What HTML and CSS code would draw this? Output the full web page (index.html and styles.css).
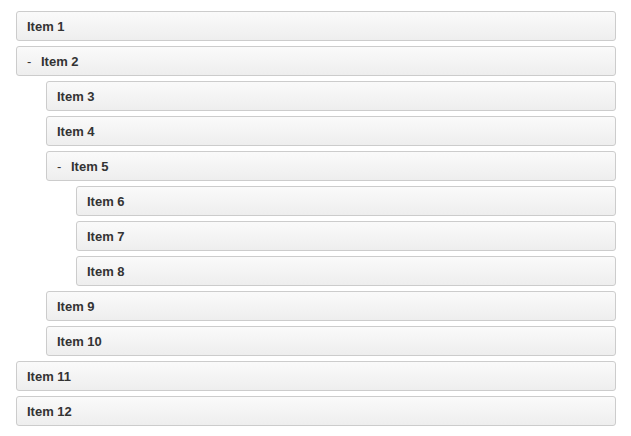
FILE: index.html
```html
<!DOCTYPE html>
<html>
<head>
<meta charset="utf-8">
<link rel="stylesheet" href="styles.css">
</head>
<body>
<div class="dd">
  <ol class="dd-list">
    <li class="dd-item"><div class="dd-handle">Item 1</div></li>
    <li class="dd-item">
      <div class="dd-handle"><span class="toggle">-</span>Item 2</div>
      <ol class="dd-list nested">
        <li class="dd-item"><div class="dd-handle">Item 3</div></li>
        <li class="dd-item"><div class="dd-handle">Item 4</div></li>
        <li class="dd-item">
          <div class="dd-handle"><span class="toggle">-</span>Item 5</div>
          <ol class="dd-list nested">
            <li class="dd-item"><div class="dd-handle">Item 6</div></li>
            <li class="dd-item"><div class="dd-handle">Item 7</div></li>
            <li class="dd-item"><div class="dd-handle">Item 8</div></li>
          </ol>
        </li>
        <li class="dd-item"><div class="dd-handle">Item 9</div></li>
        <li class="dd-item"><div class="dd-handle">Item 10</div></li>
      </ol>
    </li>
    <li class="dd-item"><div class="dd-handle">Item 11</div></li>
    <li class="dd-item"><div class="dd-handle">Item 12</div></li>
  </ol>
</div>
</body>
</html>
```
FILE: styles.css
```css
html, body {
  margin: 0;
  padding: 0;
  background: #fff;
}
body {
  font-family: "Liberation Sans", Arial, sans-serif;
}
.dd {
  width: 600px;
  padding: 6px 0 0 16px;
  font-size: 13px;
  line-height: 20px;
}
.dd-list {
  list-style: none;
  margin: 0;
  padding: 0;
}
.dd-list.nested {
  padding-left: 30px;
}
.dd-handle {
  display: flex;
  box-sizing: border-box;
  height: 30px;
  margin: 5px 0;
  padding: 5px 10px 0;
  color: #333;
  font-weight: bold;
  border: 1px solid #ccc;
  border-radius: 3px;
  background: linear-gradient(to bottom, #fafafa 0%, #eeeeee 100%);
}
.toggle {
  width: 14px;
  flex: none;
  font-weight: normal;
}
```
